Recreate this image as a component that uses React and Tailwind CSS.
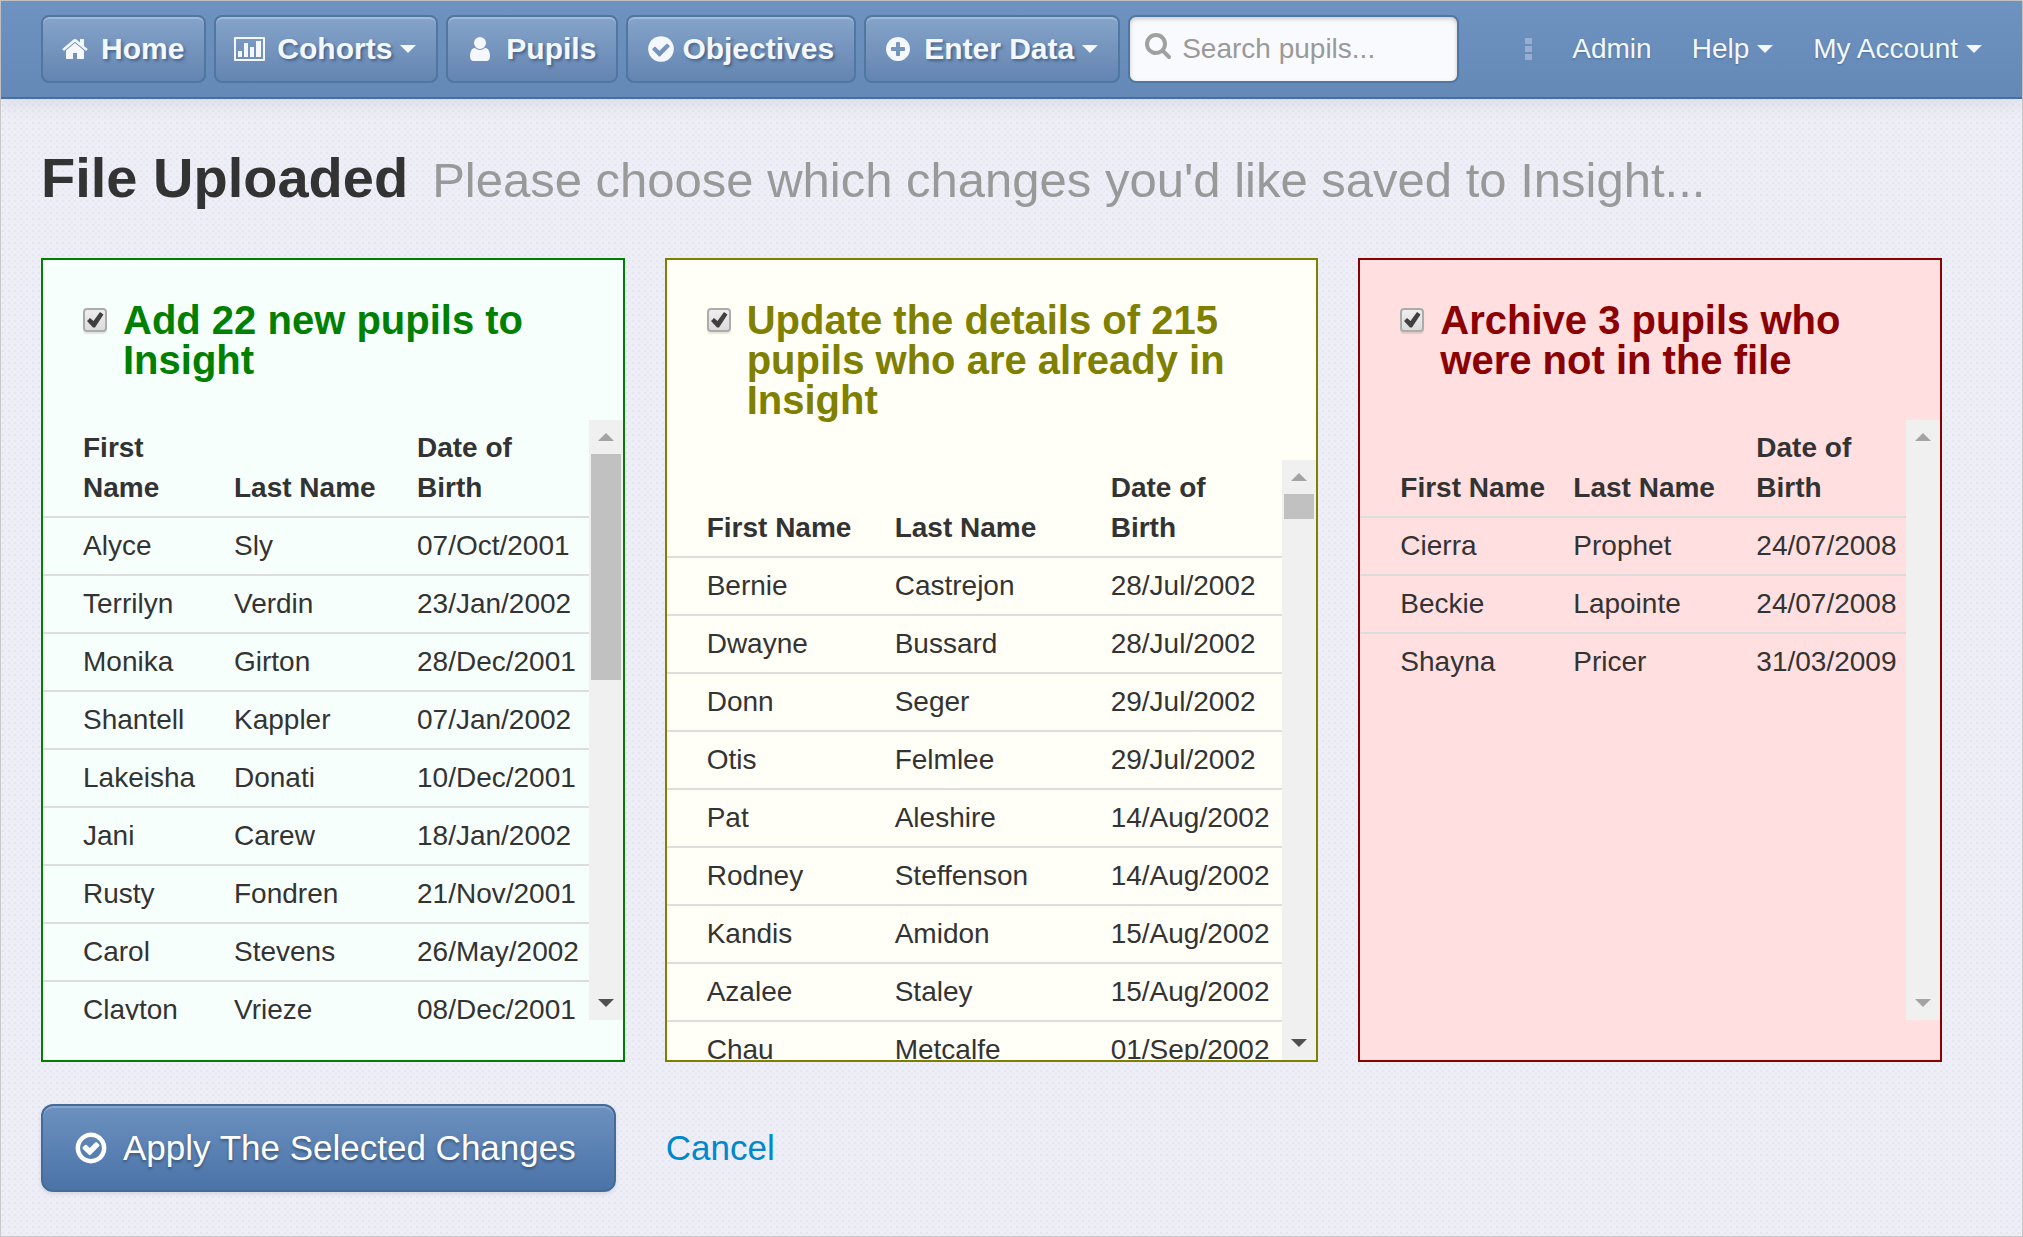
import React, { useState } from "react";

const newPupils = [
  ["Alyce", "Sly", "07/Oct/2001"],
  ["Terrilyn", "Verdin", "23/Jan/2002"],
  ["Monika", "Girton", "28/Dec/2001"],
  ["Shantell", "Kappler", "07/Jan/2002"],
  ["Lakeisha", "Donati", "10/Dec/2001"],
  ["Jani", "Carew", "18/Jan/2002"],
  ["Rusty", "Fondren", "21/Nov/2001"],
  ["Carol", "Stevens", "26/May/2002"],
  ["Clayton", "Vrieze", "08/Dec/2001"],
];

const updatedPupils = [
  ["Bernie", "Castrejon", "28/Jul/2002"],
  ["Dwayne", "Bussard", "28/Jul/2002"],
  ["Donn", "Seger", "29/Jul/2002"],
  ["Otis", "Felmlee", "29/Jul/2002"],
  ["Pat", "Aleshire", "14/Aug/2002"],
  ["Rodney", "Steffenson", "14/Aug/2002"],
  ["Kandis", "Amidon", "15/Aug/2002"],
  ["Azalee", "Staley", "15/Aug/2002"],
  ["Chau", "Metcalfe", "01/Sep/2002"],
];

const archivedPupils = [
  ["Cierra", "Prophet", "24/07/2008"],
  ["Beckie", "Lapointe", "24/07/2008"],
  ["Shayna", "Pricer", "31/03/2009"],
];

const TABLE_HEAD = ["First Name", "Last Name", "Date of Birth"];

// outer circle shared by the round icons
const RING =
  "M1664 896q0 209-103 385.5t-279.5 279.5-385.5 103-385.5-103-279.5-279.5-103-385.5 103-385.5 279.5-279.5 385.5-103 385.5 103 279.5 279.5 103 385.5z";

const ICONS = {
  home: "M1472 992v480q0 26-19 45t-45 19h-384v-384h-256v384h-384q-26 0-45-19t-19-45v-480q0-1 .5-3t.5-3l575-474 575 474q1 2 1 6zm223-69l-62 74q-8 9-21 11h-3q-13 0-21-7l-692-577-692 577q-12 8-24 7-13-2-21-11l-62-74q-8-10-7-23.5t11-21.5l719-599q32-26 76-26t76 26l244 204v-195q0-14 9-23t23-9h192q14 0 23 9t9 23v408l219 182q10 8 11 21.5t-7 23.5z",
  user: "M1536 1399q0 109-62.5 187t-150.5 78h-854q-88 0-150.5-78t-62.5-187q0-85 8.5-160.5t31.5-152 58.5-131 94-89 134.5-34.5q131 128 313 128t313-128q76 0 134.5 34.5t94 89 58.5 131 31.5 152 8.5 160.5zm-256-887q0 159-112.5 271.5t-271.5 112.5-271.5-112.5-112.5-271.5 112.5-271.5 271.5-112.5 271.5 112.5 112.5 271.5z",
  check:
    RING +
    "M1412 734q0-28-18-46l-91-90q-19-19-45-19t-45 19l-408 407-226-226q-19-19-45-19t-45 19l-91 90q-18 18-18 46 0 27 18 45l362 362q19 19 45 19 27 0 46-19l543-543q18-18 18-45z",
  plus:
    RING +
    "M1344 960v-128q0-26-19-45t-45-19h-256v-256q0-26-19-45t-45-19h-128q-26 0-45 19t-19 45v256h-256q-26 0-45 19t-19 45v128q0 26 19 45t45 19h256v256q0 26 19 45t45 19h128q26 0 45-19t19-45v-256h256q26 0 45-19t19-45z",
  checkRing:
    RING +
    "M1440 896q0-148-73-273t-198-198-273-73-273 73-198 198-73 273 73 273 198 198 273 73 273-73 198-198 73-273z" +
    "M1299 813l-422 422q-19 19-45 19t-45-19l-294-294q-19-19-19-45t19-45l102-102q19-19 45-19t45 19l147 147 275-275q19-19 45-19t45 19l102 102q19 19 19 45t-19 45z",
  search:
    "M1216 832q0-185-131.5-316.5t-316.5-131.5-316.5 131.5-131.5 316.5 131.5 316.5 316.5 131.5 316.5-131.5 131.5-316.5zm512 832q0 52-38 90t-90 38q-54 0-90-38l-343-342q-179 124-399 124-143 0-273.5-55.5t-225-150-150-225-55.5-273.5 55.5-273.5 150-225 225-150 273.5-55.5 273.5 55.5 225 150 150 225 55.5 273.5q0 220-124 399l343 343q37 37 37 90z",
};

const Icon = ({ name, className }) => (
  <svg viewBox="0 0 1792 1792" fill="currentColor" fillRule="evenodd" className={className} aria-hidden="true">
    <path d={ICONS[name]} />
  </svg>
);

const ChartIcon = ({ className }) => (
  <svg viewBox="0 0 31 24" fill="currentColor" className={className} aria-hidden="true">
    <path
      fillRule="evenodd"
      d="M1 0h29a1 1 0 0 1 1 1v22a1 1 0 0 1-1 1H1a1 1 0 0 1-1-1V1a1 1 0 0 1 1-1zM2 2v20h27V2z"
    />
    <path d="M4 14h4v6H4zM10 6h4v14h-4zM16 10h4v10h-4zM22 4h5v16h-5z" />
  </svg>
);

const Caret = () => (
  <svg viewBox="0 0 16 8" fill="currentColor" className="ml-2 h-2 w-4" aria-hidden="true">
    <path d="M0 0h16L8 8z" />
  </svg>
);

const NavButton = ({ icon, label, caret, tight }) => (
  <button
    className={`flex h-[68px] items-center rounded-lg border-2 border-[#50779f] bg-linear-to-b from-[#86a4ca] to-[#6485b1] pr-5 pl-[18px] text-[30px] leading-10 font-bold whitespace-nowrap text-[#f4f8fc] shadow-[inset_0_2px_0_rgba(255,255,255,0.25)] [text-shadow:2px_2px_3px_rgba(40,70,110,0.6)] ${
      tight ? "gap-1.5" : "gap-3"
    }`}
  >
    {icon}
    <span className="flex items-center">
      {label}
      {caret && <Caret />}
    </span>
  </button>
);

const NavLink = ({ label, caret }) => (
  <a href="#" className="flex items-center text-[28px] leading-10 whitespace-nowrap text-[#f4f8fc]">
    {label}
    {caret && <Caret />}
  </a>
);

// up / thumb / down bar drawn next to each list
const ScrollRail = ({ thumb, active }) => (
  <div className="flex w-[34px] shrink-0 flex-col bg-[#f0f0f0]" aria-hidden="true">
    <div className="flex h-[34px] items-center justify-center text-[#a3a3a3]">
      <svg viewBox="0 0 16 8" fill="currentColor" className="h-2 w-4">
        <path d="M0 8h16L8 0z" />
      </svg>
    </div>
    <div className="flex-1 px-0.5">
      {active && <div className={`bg-[#c1c1c1] ${thumb}`} />}
    </div>
    <div className={`flex h-[34px] items-center justify-center ${active ? "text-[#505050]" : "text-[#a3a3a3]"}`}>
      <svg viewBox="0 0 16 8" fill="currentColor" className="h-2 w-4">
        <path d="M0 0h16L8 8z" />
      </svg>
    </div>
  </div>
);

const ChangePanel = ({ id, title, rows, panel, cols, thumb, active }) => {
  const [checked, setChecked] = useState(true);

  return (
    <section className={`overflow-hidden border-2 ${panel}`}>
      <div className="flex gap-4 p-10">
        <div className="relative mt-2 h-6 w-6 shrink-0">
          <input
            id={id}
            type="checkbox"
            checked={checked}
            onChange={(e) => setChecked(e.target.checked)}
            className="block h-6 w-6 appearance-none rounded border-2 border-[#acacac] bg-linear-to-b from-[#eeeeee] to-[#dcdcdc] shadow-[0_2px_1px_rgba(0,0,0,0.1)]"
          />
          {checked && (
            <svg viewBox="0 0 24 24" className="pointer-events-none absolute inset-0 h-6 w-6" fill="#404040" aria-hidden="true">
              <path d="M4 13l3-3 3.500 3L17 4l3.500 2.500L12 19.500h-2z" />
            </svg>
          )}
        </div>
        <h2 className="text-[40px] leading-10 font-bold">
          <label htmlFor={id}>{title}</label>
        </h2>
      </div>
      <div className="flex h-[600px]">
        <div className="min-w-0 flex-1 overflow-x-hidden overflow-y-auto [scrollbar-width:none]">
          <table className="w-full table-fixed text-left text-[28px] leading-10 text-[#333333]">
            <colgroup>
              <col className={cols[0]} />
              <col className={cols[1]} />
              <col />
            </colgroup>
            <thead>
              <tr>
                {TABLE_HEAD.map((head) => (
                  <th key={head} className="px-2.5 py-2 align-bottom font-bold first:pl-10">
                    {head}
                  </th>
                ))}
              </tr>
            </thead>
            <tbody>
              {rows.map((row) => (
                <tr key={row[0]} className="border-t-2 border-[#dddddd]">
                  {row.map((cell, index) => (
                    <td key={index} className="px-2.5 py-2 whitespace-nowrap first:pl-10">
                      {cell}
                    </td>
                  ))}
                </tr>
              ))}
            </tbody>
          </table>
        </div>
        <ScrollRail thumb={thumb} active={active} />
      </div>
    </section>
  );
};

const App = () => {
  return (
    <div className="min-h-screen border border-[#c8c8c8] bg-[#efeff8] bg-[radial-gradient(circle_at_2px_2px,rgba(120,120,160,0.07)_1px,transparent_2px),radial-gradient(circle_at_5px_5px,rgba(120,120,160,0.05)_1px,transparent_2px)] bg-size-[6px_6px] font-['Liberation_Sans',Arial,sans-serif] text-[#333333]">
      <header className="flex items-center gap-2 border-b-2 border-[#4470a5] bg-linear-to-b from-[#6f93c0] to-[#6489b6] px-10 py-3.5 shadow-[0_2px_20px_rgba(0,0,0,0.1)]">
        <NavButton icon={<Icon name="home" className="h-7 w-7" />} label="Home" />
        <NavButton icon={<ChartIcon className="h-6 w-[31px]" />} label="Cohorts" caret />
        <NavButton icon={<Icon name="user" className="h-7 w-7" />} label="Pupils" />
        <NavButton icon={<Icon name="check" className="h-[30px] w-[30px]" />} label="Objectives" tight />
        <NavButton icon={<Icon name="plus" className="h-7 w-7" />} label="Enter Data" caret />
        <div className="relative">
          <Icon name="search" className="absolute top-4 left-4 h-7 w-7 text-[#a0a0a0]" />
          <input
            type="text"
            aria-label="Search pupils"
            placeholder="Search pupils..."
            className="block h-[68px] w-[331px] rounded-lg border-2 border-[#50779f] bg-[#f9fafd] pr-4 pl-[52px] text-[28px] text-[#333333] shadow-[inset_0_2px_4px_rgba(0,0,0,0.2)] placeholder:text-[#999999]"
          />
        </div>
        <nav className="ml-auto flex items-center gap-10 [text-shadow:0_1px_2px_rgba(40,70,110,0.4)]">
          <svg viewBox="0 0 7 22" className="h-[22px] w-[7px] text-[#98add0]" fill="currentColor" aria-hidden="true">
            <path d="M0 0h7v6H0zM0 8h7v6H0zM0 16h7v6H0z" />
          </svg>
          <NavLink label="Admin" />
          <NavLink label="Help" caret />
          <NavLink label="My Account" caret />
        </nav>
      </header>

      <main className="pt-[39px] pr-20 pb-10 pl-10">
        <h1 className="mb-10 flex items-baseline gap-6 text-[56px] leading-[80px] font-bold whitespace-nowrap">
          File Uploaded
          <small className="text-[49px] leading-none font-normal text-[#999999]">
            Please choose which changes you'd like saved to Insight...
          </small>
        </h1>

        <div className="grid grid-cols-[584fr_654fr_584fr] gap-10">
          <ChangePanel
            id="add-pupils"
            title="Add 22 new pupils to Insight"
            rows={newPupils}
            panel="border-[#008000] bg-[#f7fffc] text-[#008000]"
            cols={["w-[181px]", "w-[183px]"]}
            thumb="h-[226px]"
            active
          />
          <ChangePanel
            id="update-pupils"
            title="Update the details of 215 pupils who are already in Insight"
            rows={updatedPupils}
            panel="border-[#808000] bg-[#fffff7] text-[#808000]"
            cols={["w-[218px]", "w-[216px]"]}
            thumb="h-[25px]"
            active
          />
          <ChangePanel
            id="archive-pupils"
            title="Archive 3 pupils who were not in the file"
            rows={archivedPupils}
            panel="border-[#8b0000] bg-[#ffdfdf] text-[#8b0000]"
            cols={["w-[203px]", "w-[183px]"]}
          />
        </div>

        <div className="mt-[42px] flex items-center gap-[50px] text-[35px] leading-10">
          <button className="flex items-center gap-3.5 rounded-xl border-2 border-[#456b9a] bg-linear-to-b from-[#6c91bf] to-[#4a73a8] py-[22px] pr-[38px] pl-[30px] text-white shadow-[inset_0_2px_0_rgba(255,255,255,0.2),0_2px_4px_rgba(0,0,0,0.1)] [text-shadow:0_2px_3px_rgba(0,0,0,0.35)]">
            <Icon name="checkRing" className="h-9 w-9" />
            Apply The Selected Changes
          </button>
          <a href="#" className="text-[#0088cc]">
            Cancel
          </a>
        </div>
      </main>
    </div>
  );
};

export default App;
